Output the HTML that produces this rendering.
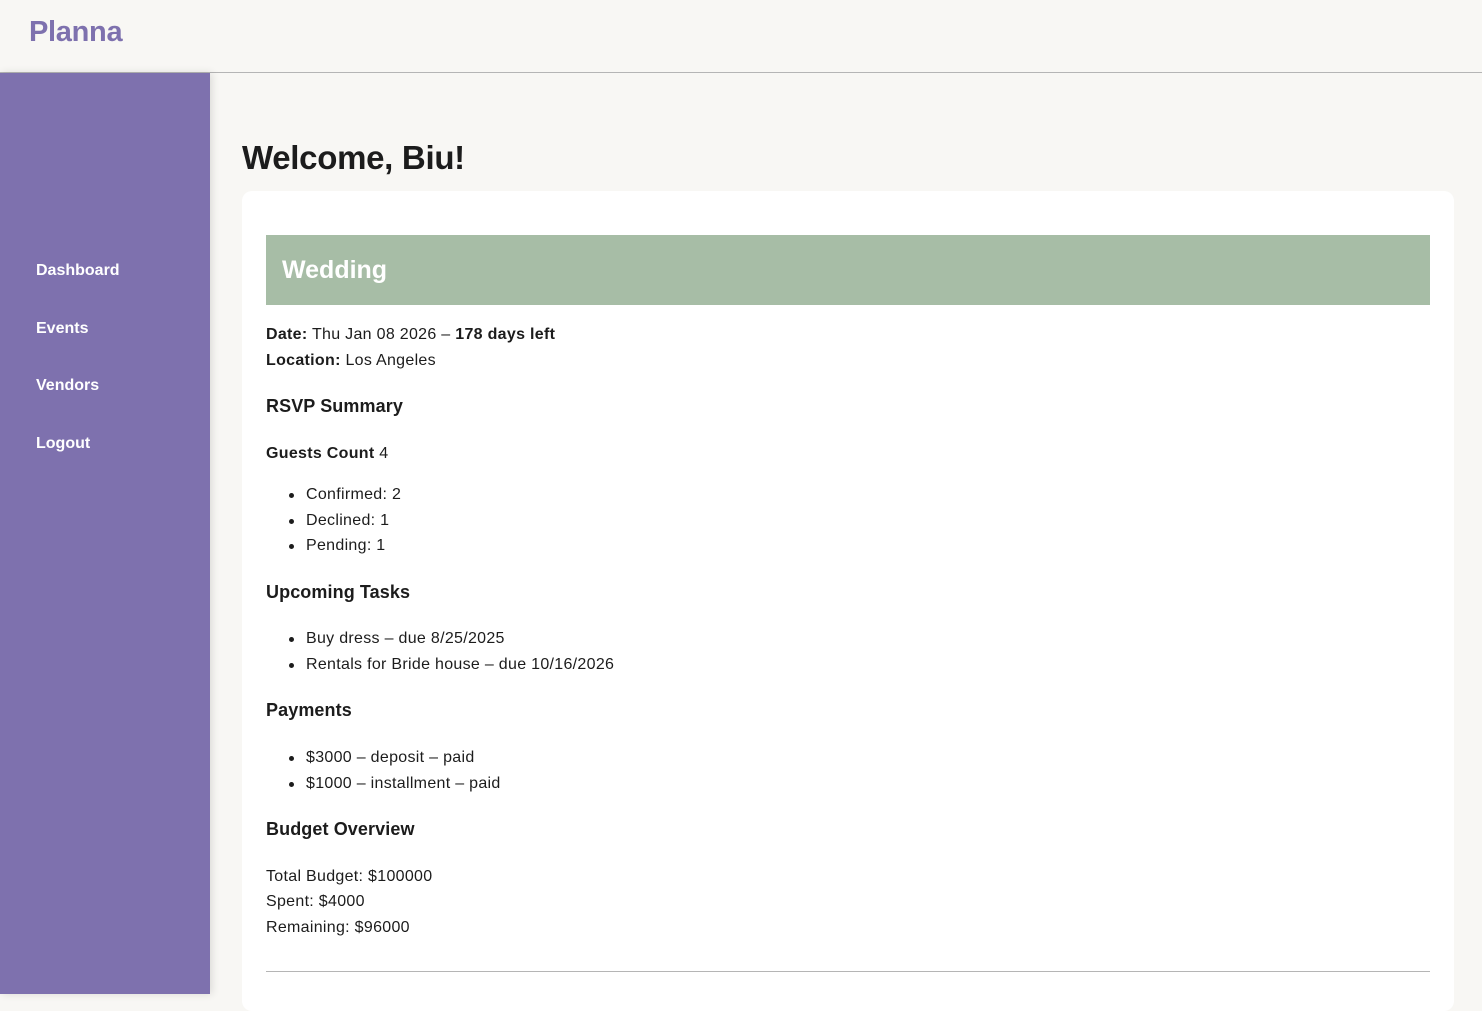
<!DOCTYPE html>
<html><head><style>
*{margin:0;padding:0;box-sizing:border-box}
body{width:1482px;height:994px;overflow:hidden;background:#f8f7f4;font-family:"Liberation Sans",sans-serif;color:#1c1c1c;position:relative}
.hdr{position:absolute;left:0;top:0;width:1482px;height:73px;border-bottom:1px solid #b5b5b5;background:#f8f7f4}
.logo{position:absolute;left:29px;top:16px;font-size:29px;font-weight:bold;color:#7e71ae;letter-spacing:-0.3px}
.side{position:absolute;left:0;top:73px;width:210px;height:921px;background:#7e71ae;box-shadow:2px 0 8px rgba(0,0,0,0.12)}
.side a{position:absolute;left:36px;color:#fff;font-weight:bold;font-size:16px;text-decoration:none}
h1{position:absolute;left:242px;top:139px;font-size:33px;font-weight:bold;letter-spacing:-0.3px}
.card{position:absolute;left:242px;top:191px;width:1212px;height:820px;background:#fff;border-radius:10px}
.ban{position:absolute;left:24px;top:44px;width:1164px;height:70px;background:#a7bda6;color:#fff;font-size:25px;font-weight:bold;padding:21px 16px}
.t{position:absolute;left:24px;font-size:16px;white-space:nowrap;letter-spacing:0.3px}
.h{position:absolute;left:24px;font-size:18px;font-weight:bold;letter-spacing:0.1px}
.li{position:absolute;left:64px;font-size:16px;white-space:nowrap;letter-spacing:0.3px}
.li:before{content:"";position:absolute;left-17px;left:-17px;top:7px;width:5px;height:5px;border-radius:50%;background:#1c1c1c}
hr{position:absolute;left:24px;top:780px;width:1164px;border:0;border-top:1px solid #b5b5b5}
</style></head><body>
<div class="hdr"><div class="logo">Planna</div></div>
<div class="side">
<a style="top:189px">Dashboard</a>
<a style="top:247px">Events</a>
<a style="top:304px">Vendors</a>
<a style="top:362px">Logout</a>
</div>
<h1>Welcome, Biu!</h1>
<div class="card">
<div class="ban">Wedding</div>
<div class="t" style="top:135px"><b>Date:</b> Thu Jan 08 2026 – <b>178 days left</b></div>
<div class="t" style="top:161px"><b>Location:</b> Los Angeles</div>
<div class="h" style="top:205px">RSVP Summary</div>
<div class="t" style="top:254px"><b>Guests Count</b> 4</div>
<div class="li" style="top:295px">Confirmed: 2</div>
<div class="li" style="top:321px">Declined: 1</div>
<div class="li" style="top:346px">Pending: 1</div>
<div class="h" style="top:391px">Upcoming Tasks</div>
<div class="li" style="top:439px">Buy dress – due 8/25/2025</div>
<div class="li" style="top:465px">Rentals for Bride house – due 10/16/2026</div>
<div class="h" style="top:509px">Payments</div>
<div class="li" style="top:558px">$3000 – deposit – paid</div>
<div class="li" style="top:584px">$1000 – installment – paid</div>
<div class="h" style="top:628px">Budget Overview</div>
<div class="t" style="top:677px">Total Budget: $100000</div>
<div class="t" style="top:702px">Spent: $4000</div>
<div class="t" style="top:728px">Remaining: $96000</div>
<hr>
</div>
</body></html>
